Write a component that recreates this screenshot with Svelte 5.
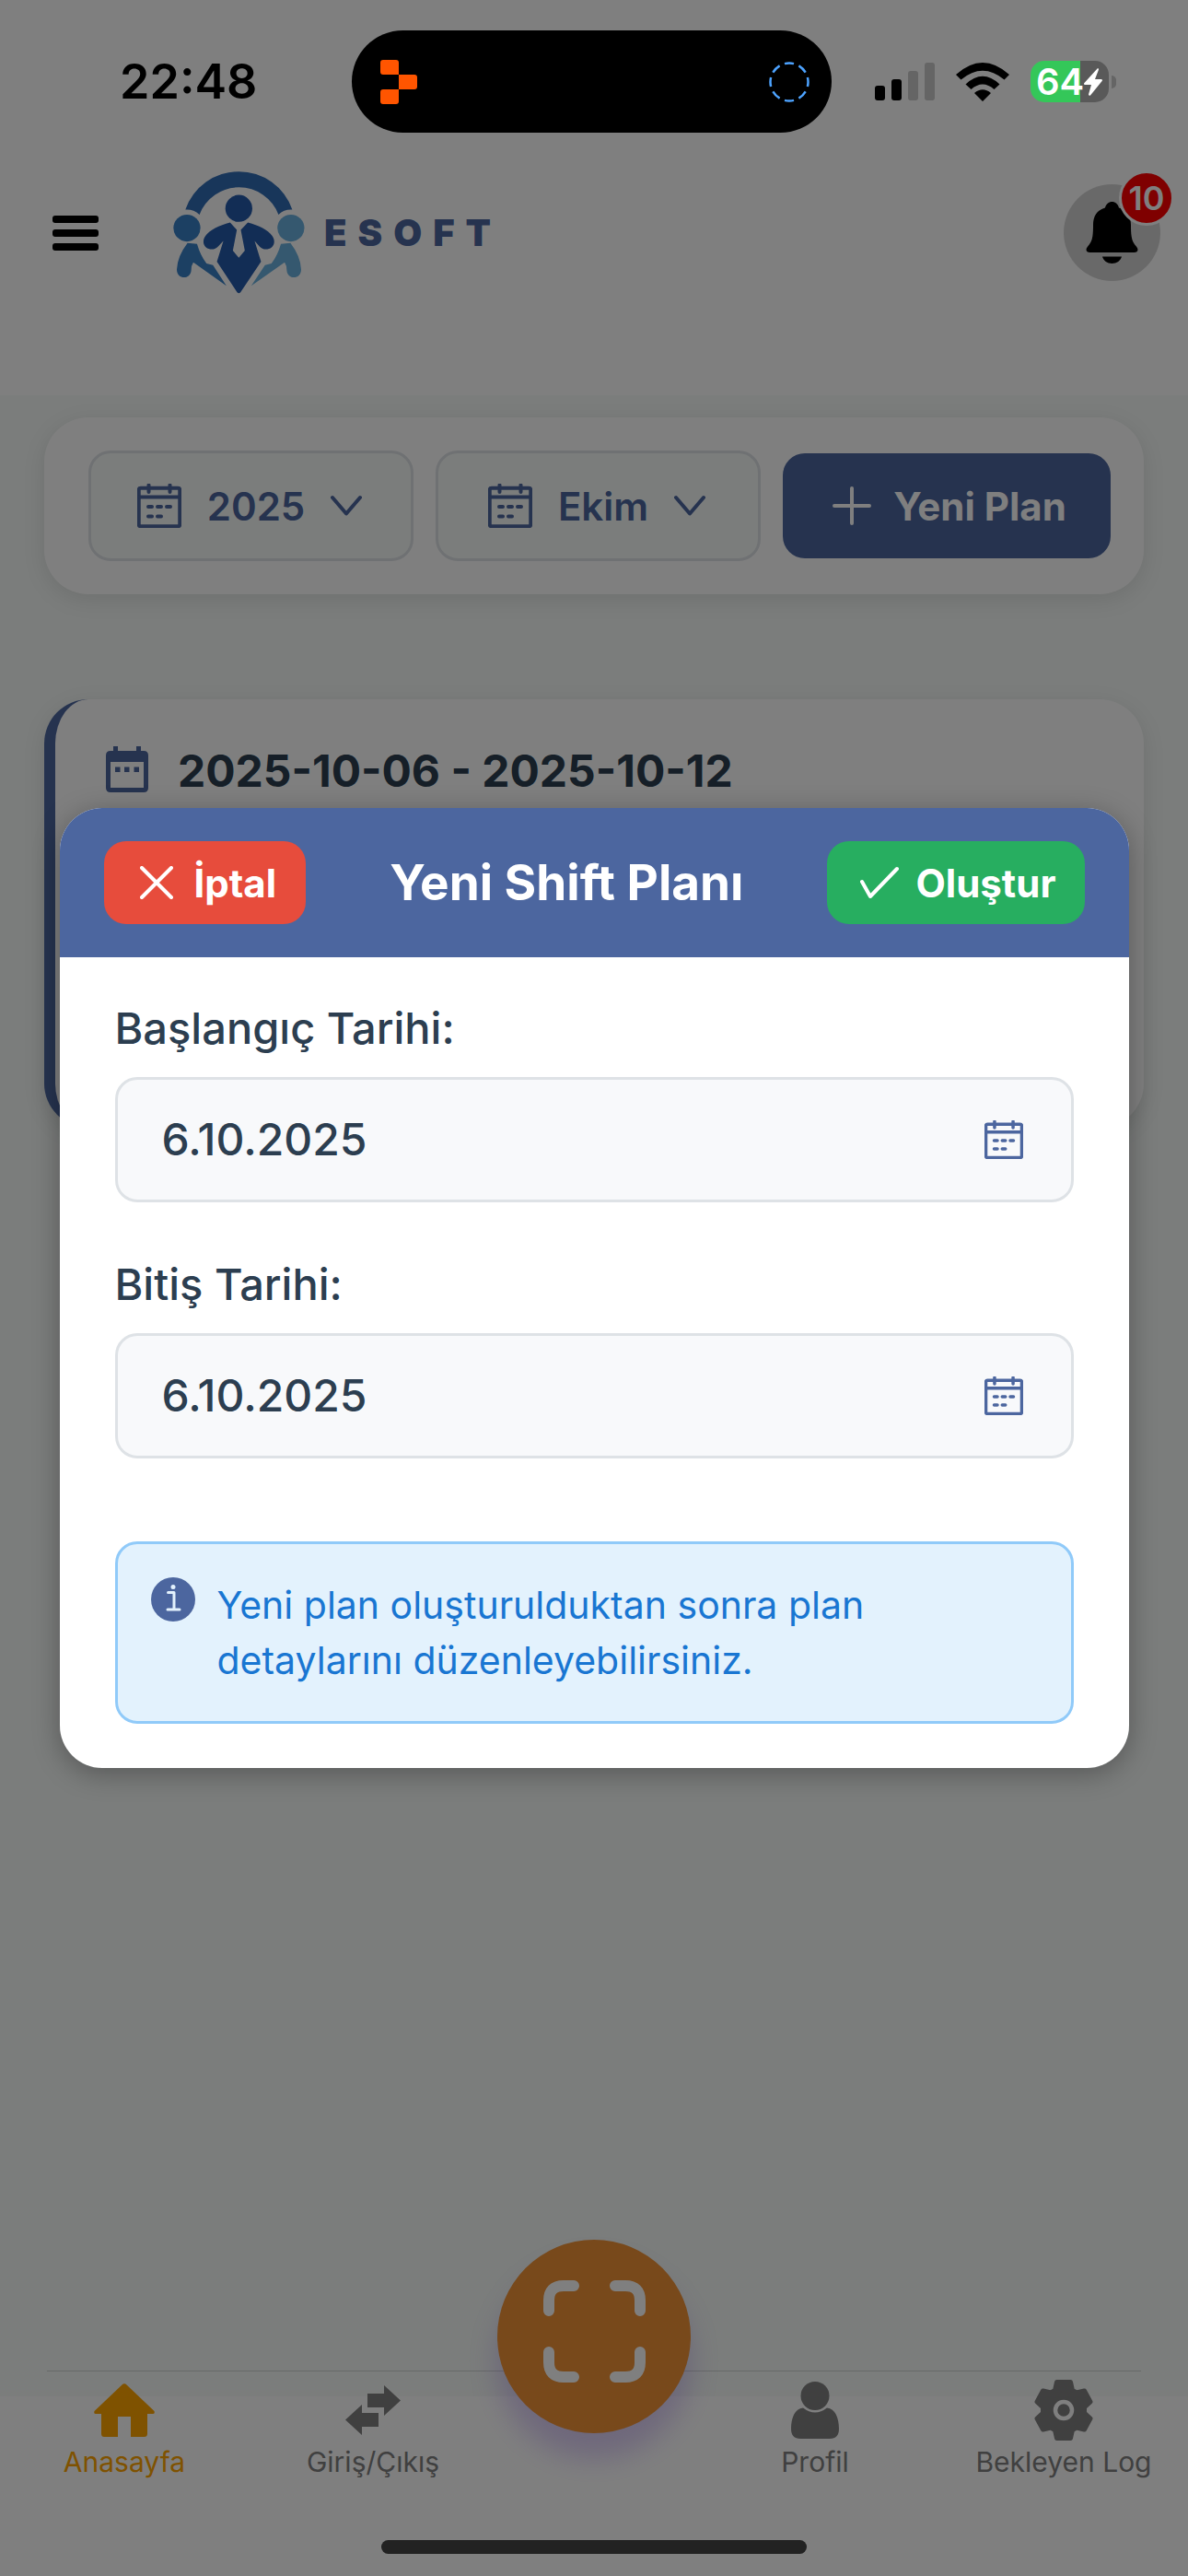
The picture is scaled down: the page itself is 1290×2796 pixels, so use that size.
<script>
  let year = $state('2025');
  let month = $state('Ekim');
  let startDate = $state('6.10.2025');
  let endDate = $state('6.10.2025');

  const years = ['2024', '2025', '2026'];
  const months = ['Ocak', 'Mart', 'Nisan', 'Ekim'];
</script>

{#snippet calendar(size)}
  <svg class="line-icon" width={size} height={size} viewBox="0 0 48 48" aria-hidden="true">
    <rect x="1.75" y="4.75" width="44.5" height="41.5" rx="2" />
    <path d="M2 14.5H46M12.5 1.5V9M35.5 1.5V9M12 25H16M22 25H26M32 25H36M12 35.5H16M22 35.5H26" />
  </svg>
{/snippet}

{#snippet chevron()}
  <svg class="line-icon" width="34" height="24" viewBox="0 0 34 24" aria-hidden="true">
    <path d="M2 3L17 20.500L32 3" />
  </svg>
{/snippet}

<div class="screen">
  <div class="status">
    <time>22:48</time>
    <div class="island">
      <svg width="40" height="48" viewBox="0 0 40 48" fill="#ff5500" aria-hidden="true">
        <path d="M3 0H17Q20 0 20 3V16H3Q0 16 0 13V3Q0 0 3 0ZM20 16H37Q40 16 40 19V29Q40 32 37 32H20ZM3 32H20V45Q20 48 17 48H3Q0 48 0 45V35Q0 32 3 32Z" />
      </svg>
      <svg width="46" height="46" viewBox="0 0 46 46" aria-hidden="true">
        <circle cx="23" cy="23" r="20.500" fill="none" stroke="#4da3ff" stroke-width="2.500" pathLength="80" stroke-dasharray="6.400 3.600" stroke-dashoffset="3.200" />
      </svg>
    </div>
    <div class="indicators">
      <svg width="65" height="41" viewBox="0 0 65 41" aria-hidden="true">
        <rect y="25" width="11" height="16" rx="3" />
        <rect x="18" y="18" width="11" height="23" rx="3" />
        <g fill="#656565">
          <rect x="36" y="9" width="11" height="32" rx="3" />
          <rect x="54" width="11" height="41" rx="3" />
        </g>
      </svg>
      <svg width="58" height="42" viewBox="0 0 58 42" aria-hidden="true">
        <path d="M0 13Q29 -13 58 13L52.500 18.500Q29 -1 5.500 18.500ZM10.500 23.500Q29 6 47.500 23.500L41.500 29Q29 18 16.500 29ZM20 33Q29 25.500 38 33L29 42Z" />
      </svg>
      <div class="battery">
        <div class="cell">
          <span>64</span>
          <svg width="20" height="30" viewBox="0 0 20 30" aria-hidden="true">
            <path fill="#fff" d="M15 0L0 16.500Q0 18 1 18H8L5 28.500Q5.500 30.500 7 29.500L20 13.500Q20 12 19 12H12L16 1.500Q16 0 15 0Z" />
          </svg>
        </div>
        <i></i>
      </div>
    </div>
  </div>

  <header>
    <button class="menu" aria-label="Menü"><i></i><i></i><i></i></button>
    <a class="brand" href="#anasayfa">
      <svg width="143" height="133" viewBox="54 44 430 398" aria-hidden="true">
        <path fill="#306cb4" d="M94 168A184.600 184.600 0 0 1 443 168Q417 166 398 184A138 138 0 0 0 140 184Q120 166 94 168Z" />
        <g fill="#245aaa">
          <circle cx="268.500" cy="164" r="44" />
          <path d="M240 210L262 234L249 302L268.500 325L288 302L275 234L298 210C345 222 384 246 384 272C384 298 350 305 336 288L320 270L341 338L274 438Q268.500 444 263 438L197 338L218 270L201 288C187 305 153 298 153 272C153 246 193 222 240 210Z" />
        </g>
        <g fill="#3880c6">
          <circle cx="99" cy="228" r="44" />
          <path d="M101 277L132 280Q143 318 163 344L184 349L228 417L120 340Q113 350 113 366C111 397 66 397 66 363Q68 320 101 277Z" />
        </g>
        <g fill="#6ab0de">
          <circle cx="438.500" cy="228" r="44" />
          <path d="M437 277L406 280Q395 318 375 344L354 349L309 417L418 340Q425 350 425 366C427 397 472 397 472 363Q470 320 437 277Z" />
        </g>
      </svg>
      <span>ESOFT</span>
    </a>
    <button class="bell" aria-label="Bildirimler">
      <svg width="57" height="67" viewBox="0 0 57 67" aria-hidden="true">
        <path d="M28.500 0C32 0 35 2.500 36 6.500C45 9 49 16 49 25C49 38 50 43 54.500 48C58 52 56.500 55 52.500 55H4.500C.500 55 -1 52 2.500 48C7 43 8 38 8 25C8 16 12 9 21 6.500C22 2.500 25 0 28.500 0ZM18 59.500H39C38 64 33.500 67 28.500 67S19 64 18 59.500Z" />
      </svg>
      <span class="badge">10</span>
    </button>
  </header>

  <main>
    <section class="filters" aria-label="Plan filtreleri">
      <label class="picker">
        {@render calendar(48)}
        <select bind:value={year} aria-label="Yıl">
          {#each years as y}<option>{y}</option>{/each}
        </select>
        {@render chevron()}
      </label>
      <label class="picker">
        {@render calendar(48)}
        <select bind:value={month} aria-label="Ay">
          {#each months as m}<option>{m}</option>{/each}
        </select>
        {@render chevron()}
      </label>
      <button class="new-plan">
        <svg class="line-icon" width="42" height="42" viewBox="0 0 42 42" aria-hidden="true"><path d="M21 2V40M2 21H40" /></svg>
        Yeni Plan
      </button>
    </section>

    <article class="week">
      <svg width="46" height="50" viewBox="0 0 46 50" aria-hidden="true">
        <path fill="#4c669f" fill-rule="evenodd" d="M8 0H13V5H33V0H38V5H41Q46 5 46 10V45Q46 50 41 50H5Q0 50 0 45V10Q0 5 5 5H8ZM5 17V45H41V17ZM10 22.500H15.500V28H10ZM20 22.500H25.500V28H20ZM30.500 22.500H36V28H30.500Z" />
      </svg>
      <h2>2025-10-06 - 2025-10-12</h2>
    </article>
  </main>

  <footer>
    <hr />
    <nav>
      <a class="active" href="#anasayfa">
        <span class="glyph">
          <svg width="66" height="58" viewBox="0 0 66 58" aria-hidden="true"><path d="M30.500 1.500Q33 -1 35.500 1.500L65.500 30Q66.500 33 64 33H58V54.500Q58 58 54.500 58H40V36H26V58H11Q8 58 8 54.500V33H2Q-.500 33 .500 30Z" /></svg>
        </span>
        Anasayfa
      </a>
      <a href="#giris">
        <span class="glyph">
          <svg width="60" height="54" viewBox="0 0 60 54" aria-hidden="true"><path d="M24 9H42V0L60 16.500L42 33V24H24ZM36 30V45H18V54L0 37.500L18 21V30Z" /></svg>
        </span>
        Giriş/Çıkış
      </a>
      <button class="scan" aria-label="Tara">
        <svg width="111" height="111" viewBox="0 0 111 111" fill="none" stroke="#fff" stroke-width="12" stroke-linecap="round" aria-hidden="true">
          <path d="M6 33V22Q6 6 22 6H33M78 6H89Q105 6 105 22V33M105 78V89Q105 105 89 105H78M33 105H22Q6 105 6 89V78" />
        </svg>
      </button>
      <a href="#profil">
        <span class="glyph">
          <svg width="52" height="62" viewBox="0 0 52 62" aria-hidden="true"><circle cx="26" cy="15.500" r="15.500" /><path d="M13 28.500Q26 38.500 39 28.500C48 29 52 40 52 51Q52 62 42 62H10Q0 62 0 51C0 40 4 29 13 28.500Z" /></svg>
        </span>
        Profil
      </a>
      <a href="#log">
        <span class="glyph">
          <svg width="64" height="66" viewBox="0 0 64 66" aria-hidden="true">
            <path stroke="currentColor" stroke-width="5" stroke-linejoin="round" d="M24.500 2.500H39.500L41.500 11.500L46 14L54.500 12L61 24L54.500 30V36L61 42L54.500 54L46 52L41.500 54.500L39.500 63.500H24.500L22.500 54.500L18 52L9.500 54L3 42L9.500 36V30L3 24L9.500 12L18 14L22.500 11.500Z" />
            <circle cx="32" cy="33" r="9" fill="none" stroke="#fff" stroke-width="4.500" />
          </svg>
        </span>
        Bekleyen Log
      </a>
    </nav>
    <div class="home-bar"></div>
  </footer>

  <div class="overlay">
    <div class="modal" role="dialog" aria-modal="true" aria-labelledby="dialog-title">
      <div class="modal-head">
        <button class="cancel">
          <svg class="line-icon" width="36" height="36" viewBox="0 0 36 36" aria-hidden="true"><path d="M2 2L34 34M34 2L2 34" /></svg>
          İptal
        </button>
        <h1 id="dialog-title">Yeni Shift Planı</h1>
        <button class="create">
          <svg class="line-icon" width="42" height="36" viewBox="0 0 42 36" aria-hidden="true"><path d="M2 17L11 33L40 3" /></svg>
          Oluştur
        </button>
      </div>
      <form class="modal-body">
        <div class="field">
          <label for="start">Başlangıç Tarihi:</label>
          <div class="date">
            <input id="start" type="text" bind:value={startDate} />
            <button type="button" aria-label="Başlangıç tarihi seç">{@render calendar(42)}</button>
          </div>
        </div>
        <div class="field">
          <label for="end">Bitiş Tarihi:</label>
          <div class="date">
            <input id="end" type="text" bind:value={endDate} />
            <button type="button" aria-label="Bitiş tarihi seç">{@render calendar(42)}</button>
          </div>
        </div>
        <div class="info">
          <svg width="48" height="48" viewBox="0 0 48 48" aria-hidden="true">
            <circle cx="24" cy="24" r="24" fill="#4c669f" />
            <circle cx="24" cy="10.500" r="2.500" fill="#e3f2fd" />
            <path fill="none" stroke="#e3f2fd" stroke-width="3" stroke-linecap="round" stroke-linejoin="round" d="M18.500 16.500H25V35M18 35H31" />
          </svg>
          <p>Yeni plan oluşturulduktan sonra plan detaylarını düzenleyebilirsiniz.</p>
        </div>
      </form>
    </div>
  </div>
</div>

<style>
  :global(body) {
    margin: 0;
    background: #808080;
  }

  .screen {
    position: relative;
    display: flex;
    flex-direction: column;
    min-height: 100vh;
    background: #fff;
    font-family: Inter, "Liberation Sans", sans-serif;
    font-size: 42px;
  }

  .screen * {
    box-sizing: border-box;
  }

  svg {
    display: block;
    flex: none;
  }

  button,
  input,
  select {
    margin: 0;
    padding: 0;
    border: 0;
    background: none;
    color: inherit;
    font: inherit;
  }

  a {
    color: inherit;
    text-decoration: none;
  }

  h1,
  h2,
  p {
    margin: 0;
  }

  .line-icon {
    fill: none;
    stroke: currentColor;
    stroke-width: 4;
    stroke-linecap: round;
    stroke-linejoin: round;
  }

  /* Status bar stays above the dimmed page */
  .status {
    position: relative;
    z-index: 2;
    display: grid;
    grid-template-columns: 1fr 521px 1fr;
    align-items: center;
    padding: 33px 6px 0 0;
  }

  time {
    padding-left: 28px;
    font-size: 52px;
    font-weight: 600;
    line-height: 60px;
    text-align: center;
  }

  .island {
    display: flex;
    align-items: center;
    justify-content: space-between;
    height: 111px;
    padding: 0 23px 0 31px;
    border-radius: 56px;
    background: #000;
  }

  .indicators {
    display: flex;
    align-items: center;
    gap: 23px;
    padding-left: 47px;
  }

  .battery {
    display: flex;
    align-items: center;
    gap: 3px;
  }

  .cell {
    display: flex;
    align-items: center;
    justify-content: center;
    width: 85px;
    height: 45px;
    border-radius: 15px;
    background: linear-gradient(90deg, #34c759 64%, #595959 64%);
    color: #fff;
    font-size: 40px;
    font-weight: 600;
  }

  .battery i {
    width: 5px;
    height: 14px;
    border-radius: 0 5px 5px 0;
    background: #656565;
  }

  header {
    display: flex;
    align-items: center;
    height: 285px;
    padding: 35px 30px 103px 57px;
  }

  .menu {
    display: grid;
    gap: 7px;
    width: 50px;
    margin-right: 81px;
  }

  .menu i {
    height: 8px;
    border-radius: 3px;
    background: #000;
  }

  .brand {
    display: flex;
    align-items: center;
    gap: 21px;
    color: #4c669f;
    font-size: 40px;
    font-weight: 900;
    letter-spacing: 12px;
  }

  .bell {
    position: relative;
    display: grid;
    place-items: center;
    width: 105px;
    height: 105px;
    margin-left: auto;
    border-radius: 50%;
    background: #d3d3d3;
  }

  .badge {
    position: absolute;
    top: -15px;
    right: -15px;
    display: grid;
    place-items: center;
    width: 60px;
    height: 60px;
    border: 3px solid #fff;
    border-radius: 50%;
    background: #f00;
    color: #fff;
    font-size: 36px;
    font-weight: 600;
  }

  main {
    flex: 1;
    padding: 24px 48px;
    background: #f6faf8;
  }

  .filters {
    display: grid;
    grid-template-columns: 1fr 1fr 356px;
    align-items: center;
    gap: 24px;
    padding: 36px 36px 36px 48px;
    border-radius: 48px;
    background: #fff;
    box-shadow: 0 6px 24px rgb(0 0 0 / 10%);
    font-weight: 600;
  }

  .picker {
    display: flex;
    align-items: center;
    justify-content: center;
    gap: 28px;
    height: 120px;
    padding-right: 3px;
    border: 3px solid #dee2e6;
    border-radius: 24px;
    background: #f6faf8;
    color: #4c669f;
  }

  .picker select {
    appearance: none;
    field-sizing: content;
  }

  .new-plan {
    display: flex;
    align-items: center;
    justify-content: center;
    gap: 24px;
    height: 114px;
    padding-left: 6px;
    border-radius: 24px;
    background: #4c669f;
    color: #fff;
    font-weight: 700;
    white-space: nowrap;
  }

  .week {
    display: flex;
    align-items: flex-start;
    gap: 32px;
    min-height: 465px;
    margin-top: 114px;
    padding: 51px 55px;
    border-left: 12px solid #4c669f;
    border-radius: 48px;
    background: #fff;
    box-shadow: 0 6px 24px rgb(0 0 0 / 10%);
  }

  h2 {
    color: #2c3e50;
    font-size: 48px;
    font-weight: 700;
    line-height: 54px;
  }

  footer {
    height: 223px;
    margin-top: -28px;
  }

  hr {
    height: 1px;
    margin: 0 51px;
    border: 0;
    background: #d0d3d2;
  }

  nav {
    display: grid;
    grid-template-columns: 1fr 1fr 210px 1fr 1fr;
    height: 183px;
    color: #808080;
    font-size: 30px;
    line-height: 36px;
  }

  nav a {
    display: flex;
    flex-direction: column;
    align-items: center;
    gap: 5px;
    padding-top: 9px;
    white-space: nowrap;
  }

  nav .active {
    color: #ffa500;
  }

  .glyph {
    display: grid;
    place-items: center;
    height: 66px;
  }

  nav a svg {
    fill: currentColor;
  }

  .scan {
    display: grid;
    place-items: center;
    height: 210px;
    margin-top: -143px;
    padding-bottom: 12px;
    border-radius: 50%;
    background: #f09236;
    box-shadow: 0 27px 30px rgb(118 64 224 / 25%);
  }

  .home-bar {
    position: relative;
    z-index: 2;
    width: 462px;
    height: 15px;
    margin: 0 auto;
    border-radius: 8px;
    background: #222;
  }

  .overlay {
    position: absolute;
    inset: 0;
    z-index: 1;
    display: grid;
    place-items: center;
    background: rgb(0 0 0 / 50%);
  }

  .modal {
    width: 90%;
    overflow: hidden;
    border-radius: 46px;
    background: #fff;
    box-shadow: 0 6px 30px rgb(0 0 0 / 30%);
    color: #2c3e50;
  }

  .modal-head {
    display: flex;
    align-items: center;
    justify-content: space-between;
    padding: 36px 47px 36px 48px;
    background: #4c669f;
    color: #fff;
    font-weight: 700;
  }

  .modal-head button {
    display: flex;
    align-items: center;
    gap: 23px;
    height: 90px;
    padding: 0 32px 0 39px;
    border-radius: 24px;
  }

  .modal-head .create {
    gap: 18px;
    padding-left: 36px;
    background: #27ae60;
  }

  .cancel {
    background: #e74c3c;
  }

  h1 {
    font-size: 53px;
    font-weight: 700;
    line-height: 66px;
  }

  .modal-body {
    padding: 48px 60px;
    font-size: 48px;
    font-weight: 500;
  }

  .field {
    display: grid;
    gap: 24px;
    margin-bottom: 60px;
    line-height: 58px;
  }

  .field label {
    font-size: 47px;
  }

  .date {
    display: flex;
    align-items: center;
    height: 136px;
    padding: 0 52px 0 48px;
    border: 3px solid #dee2e6;
    border-radius: 24px;
    background: #f8f9fb;
  }

  .date input {
    flex: 1;
    min-width: 0;
    outline: 0;
  }

  .date button {
    color: #4c669f;
  }

  .info {
    display: flex;
    gap: 24px;
    margin-top: 90px;
    padding: 36px;
    border: 3px solid #90caf9;
    border-radius: 24px;
    background: #e3f2fd;
    color: #1976d2;
    font-size: 41px;
    font-weight: 400;
    line-height: 60px;
  }

  .info p {
    max-width: 780px;
  }
</style>
